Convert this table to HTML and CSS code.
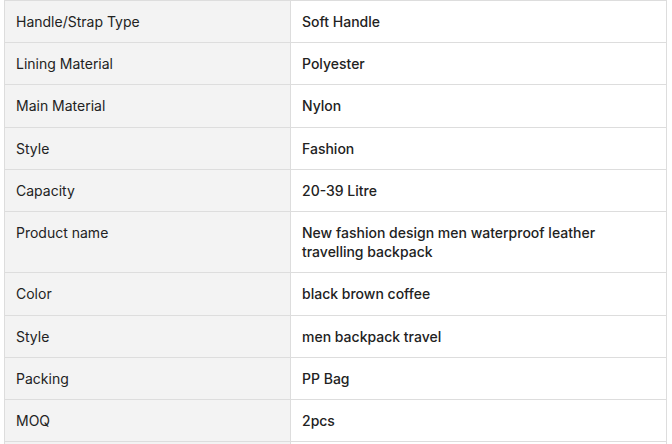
FILE: index.html
```html
<!DOCTYPE html>
<html lang="en">
<head>
<meta charset="utf-8">
<title>Product attributes</title>
<link rel="stylesheet" href="styles.css">
</head>
<body>
<div class="wrap">
<table class="attrs">
<colgroup><col class="c-key"><col class="c-val"></colgroup>
<tbody>
<tr><td class="key">Handle/Strap Type</td><td class="val">Soft Handle</td></tr>
<tr><td class="key">Lining Material</td><td class="val">Polyester</td></tr>
<tr><td class="key">Main Material</td><td class="val">Nylon</td></tr>
<tr><td class="key">Style</td><td class="val">Fashion</td></tr>
<tr><td class="key">Capacity</td><td class="val">20-39 Litre</td></tr>
<tr><td class="key">Product name</td><td class="val">New fashion design men waterproof leather travelling backpack</td></tr>
<tr><td class="key">Color</td><td class="val">black brown coffee</td></tr>
<tr><td class="key">Style</td><td class="val">men backpack travel</td></tr>
<tr><td class="key">Packing</td><td class="val">PP Bag</td></tr>
<tr><td class="key">MOQ</td><td class="val">2pcs</td></tr>
<tr class="more"><td class="key"></td><td class="val"></td></tr>
</tbody>
</table>
</div>
</body>
</html>
```
FILE: styles.css
```css
html, body {
  margin: 0;
  padding: 0;
  background: #ffffff;
}
.wrap {
  padding: 0 0 0 4px;
}
.attrs {
  width: 663px;
  table-layout: fixed;
  border-collapse: collapse;
  font-family: Inter, "Noto Sans", sans-serif;
  font-size: 14px;
  line-height: 19.2px;
  color: #222222;
}
.c-key { width: 286px; }
.attrs td {
  border: 1px solid #dddddd;
  padding: 11px 11px;
  vertical-align: top;
  text-align: left;
}
.more td {
  height: 19.2px;
}
.key {
  background: #f3f3f3;
  font-weight: 400;
}
.val {
  background: #ffffff;
  font-weight: 500;
}
```
